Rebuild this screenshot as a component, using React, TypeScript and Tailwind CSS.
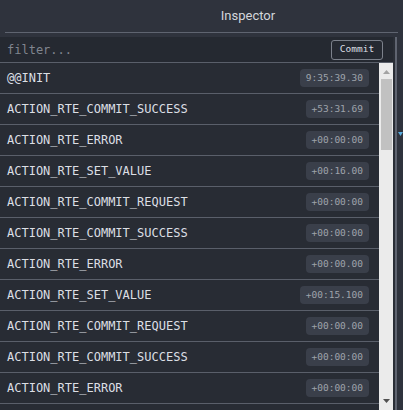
import React from "react";

const rows: [string, string][] = [
  ["@@INIT", "9:35:39.30"],
  ["ACTION_RTE_COMMIT_SUCCESS", "+53:31.69"],
  ["ACTION_RTE_ERROR", "+00:00:00"],
  ["ACTION_RTE_SET_VALUE", "+00:16.00"],
  ["ACTION_RTE_COMMIT_REQUEST", "+00:00:00"],
  ["ACTION_RTE_COMMIT_SUCCESS", "+00:00:00"],
  ["ACTION_RTE_ERROR", "+00:00.00"],
  ["ACTION_RTE_SET_VALUE", "+00:15.100"],
  ["ACTION_RTE_COMMIT_REQUEST", "+00:00.00"],
  ["ACTION_RTE_COMMIT_SUCCESS", "+00:00:00"],
  ["ACTION_RTE_ERROR", "+00:00:00"],
  ["ACTION_RTE_SET_VALUE", "+00:00:00"],
];

const mono = "font-['DejaVu_Sans_Mono',monospace]";

export default function App() {
  return (
    <div className="h-[410px] w-[403px] overflow-hidden bg-[#2f333d] flex flex-col">
      {/* header */}
      <div className="shrink-0">
        <div className="h-[32px] flex items-center justify-center pl-[93px] pt-[0px] text-[13px] text-[#d3d6db] font-['Roboto',sans-serif]">
          Inspector
        </div>
        <div className="mx-[5px] h-[1px] bg-[#5f6470]" />
        <div className="h-[4px]" />
      </div>
      {/* main */}
      <div className="flex-1 flex min-h-0">
        <div className="w-[393px] flex flex-col min-h-0 bg-[#282c34]">
          <div className="h-[26px] shrink-0 flex items-center justify-between pl-[7px] pr-[10px] bg-[#252931] border-b border-[#5a5f6a]">
            <span className={`${mono} text-[12px] text-[#80858f]`}>filter...</span>
            <button className={`${mono} h-[20px] w-[52px] border border-[#7c818b] rounded-[3px] text-[9.5px] text-[#dcdfe4] flex items-center justify-center`}>
              Commit
            </button>
          </div>
          <div className="flex-1 flex min-h-0">
            <div className="w-[379px] flex flex-col">
              {rows.map(([name, t], i) => (
                <div
                  key={i}
                  className="h-[31px] shrink-0 flex items-center justify-between pl-[7px] pr-[10px] border-b border-[#5a5f6a]"
                >
                  <span className={`${mono} text-[12px] text-[#dcdfe4]`}>{name}</span>
                  <span className={`${mono} h-[18px] px-[6px] rounded-[4px] bg-[#3a3f4a] text-[9.5px] text-[#9ea3ab] flex items-center`}>
                    {t}
                  </span>
                </div>
              ))}
            </div>
            <div className="w-[14px] bg-[#ebebeb] flex flex-col items-center">
              <div className="h-[16px] flex items-center justify-center pt-[2px]">
                <svg width="7" height="4" viewBox="0 0 7 4">
                  <path d="M3.5 0 L7 4 L0 4 Z" fill="#a3a3a3" />
                </svg>
              </div>
              <div className="w-[11px] h-[71px] bg-[#c1c1c1]" />
              <div className="flex-1" />
              <div className="h-[16px] flex items-start justify-center pt-[5px] mb-[0px]">
                <svg width="7" height="4" viewBox="0 0 7 4">
                  <path d="M0 0 L7 0 L3.5 4 Z" fill="#505050" />
                </svg>
              </div>
            </div>
          </div>
        </div>
        <div className="w-[2px] bg-[#2a2e36]" />
        <div className="w-[2px] bg-[#5f6470]" />
        <div className="flex-1 bg-[#2f333d] flex flex-col items-end">
          <div className="h-[95px]" />
          <svg width="5" height="4" viewBox="0 0 5 4">
            <path d="M0 0 L5 0 L2.5 4 Z" fill="#5aaee0" />
          </svg>
        </div>
      </div>
    </div>
  );
}
